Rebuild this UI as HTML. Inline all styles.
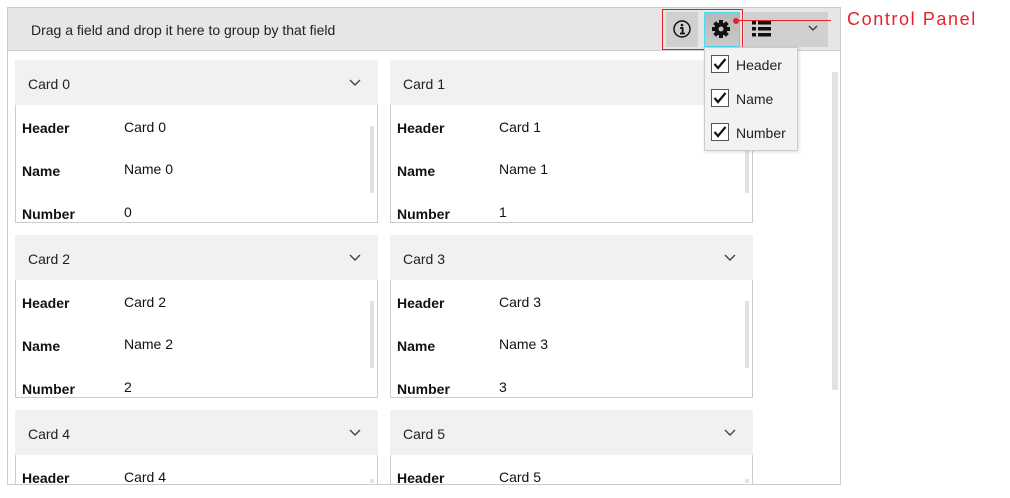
<!DOCTYPE html>
<html style="overflow:hidden"><head><style>
*{margin:0;padding:0;box-sizing:border-box}
body{width:1010px;height:498px;background:#fff;font-family:"Liberation Sans",sans-serif;font-size:14px;color:#111;position:relative;overflow:hidden}
.a{position:absolute}
.frame{left:7px;top:7px;width:834px;height:478px;border:1px solid #ccc;overflow:hidden}
.band{left:8px;top:8px;width:832px;height:43px;background:#e6e6e6;border-bottom:1px solid #d0d0d0}
.card{position:absolute;width:363px;height:163px;overflow:hidden}
.ch{position:absolute;left:0;top:0;width:363px;height:45px;background:#f1f1f1}
.ch span{position:absolute;left:13px;top:16px;font-size:14px;color:#222}
.chev{position:absolute;right:17px;top:19px}
.cb{position:absolute;left:0;top:45px;width:363px;height:118px;border:1px solid #ccc;border-top:none;background:#fff}
.l{position:absolute;left:6px;font-weight:bold;font-size:14px}
.v{position:absolute;left:108px;font-size:14px}
.sb{position:absolute;left:354px;top:21px;width:4px;height:67px;background:#e2e2e2}
</style></head><body>
<div class="a frame"></div>
<div class="a band"></div>
<div class="a" style="left:31px;top:22px;font-size:14px;color:#222">Drag a field and drop it here to group by that field</div>

<div class="card" style="left:15px;top:60px"><div class="ch"><span>Card 0</span><svg class="chev" width="12" height="8"><path d="M1 1l5 5 5-5" fill="none" stroke="#444" stroke-width="1.4"/></svg></div><div class="cb"><div class="l" style="top:15px">Header</div><div class="v" style="top:14px">Card 0</div><div class="l" style="top:58px">Name</div><div class="v" style="top:56px">Name 0</div><div class="l" style="top:101px">Number</div><div class="v" style="top:99px">0</div><div class="sb"></div></div></div>
<div class="card" style="left:390px;top:60px"><div class="ch"><span>Card 1</span></div><div class="cb"><div class="l" style="top:15px">Header</div><div class="v" style="top:14px">Card 1</div><div class="l" style="top:58px">Name</div><div class="v" style="top:56px">Name 1</div><div class="l" style="top:101px">Number</div><div class="v" style="top:99px">1</div><div class="sb"></div></div></div>
<div class="card" style="left:15px;top:235px"><div class="ch"><span>Card 2</span><svg class="chev" width="12" height="8"><path d="M1 1l5 5 5-5" fill="none" stroke="#444" stroke-width="1.4"/></svg></div><div class="cb"><div class="l" style="top:15px">Header</div><div class="v" style="top:14px">Card 2</div><div class="l" style="top:58px">Name</div><div class="v" style="top:56px">Name 2</div><div class="l" style="top:101px">Number</div><div class="v" style="top:99px">2</div><div class="sb"></div></div></div>
<div class="card" style="left:390px;top:235px"><div class="ch"><span>Card 3</span><svg class="chev" width="12" height="8"><path d="M1 1l5 5 5-5" fill="none" stroke="#444" stroke-width="1.4"/></svg></div><div class="cb"><div class="l" style="top:15px">Header</div><div class="v" style="top:14px">Card 3</div><div class="l" style="top:58px">Name</div><div class="v" style="top:56px">Name 3</div><div class="l" style="top:101px">Number</div><div class="v" style="top:99px">3</div><div class="sb"></div></div></div>
<div class="card" style="left:15px;top:410px;height:74px"><div class="ch"><span>Card 4</span><svg class="chev" width="12" height="8"><path d="M1 1l5 5 5-5" fill="none" stroke="#444" stroke-width="1.4"/></svg></div><div class="cb"><div class="l" style="top:15px">Header</div><div class="v" style="top:14px">Card 4</div><div class="sb" style="top:24px;height:4px"></div></div></div>
<div class="card" style="left:390px;top:410px;height:74px"><div class="ch"><span>Card 5</span><svg class="chev" width="12" height="8"><path d="M1 1l5 5 5-5" fill="none" stroke="#444" stroke-width="1.4"/></svg></div><div class="cb"><div class="l" style="top:15px">Header</div><div class="v" style="top:14px">Card 5</div><div class="sb" style="top:24px;height:4px"></div></div></div>

<div class="a" style="left:832px;top:72px;width:6px;height:318px;background:#e2e2e2"></div>

<div class="a" style="left:666px;top:12px;width:32px;height:35px;background:#d0d0d0"></div>
<svg class="a" style="left:672px;top:19px" width="20" height="20"><circle cx="10" cy="10" r="8" fill="none" stroke="#111" stroke-width="1.5"/><circle cx="10" cy="6" r="1.3" fill="#111"/><path d="M8 9h2.6v5M8 14.5h5" stroke="#111" stroke-width="1.8" fill="none"/></svg>
<div class="a" style="left:704px;top:12px;width:36px;height:35px;background:linear-gradient(#b8b8b8,#c8c8c8);border:1px solid #4fd8f0"></div>
<svg class="a" style="left:711px;top:19px" width="20" height="20" viewBox="0 0 20 20"><g fill="#111" transform="translate(10 10)"><rect x="-2" y="-9" width="4" height="18"/><rect x="-2" y="-9" width="4" height="18" transform="rotate(45)"/><rect x="-2" y="-9" width="4" height="18" transform="rotate(90)"/><rect x="-2" y="-9" width="4" height="18" transform="rotate(135)"/><circle r="6.5"/></g><circle cx="10" cy="10" r="2.5" fill="#c0c0c0"/></svg>
<div class="a" style="left:744px;top:12px;width:84px;height:35px;background:#d0d0d0"></div>
<svg class="a" style="left:752px;top:20px" width="20" height="18"><g fill="#111"><rect x="0" y="1" width="4" height="3.5"/><rect x="6" y="1" width="13" height="3.5"/><rect x="0" y="7" width="4" height="3.5"/><rect x="6" y="7" width="13" height="3.5"/><rect x="0" y="13" width="4" height="3.5"/><rect x="6" y="13" width="13" height="3.5"/></g></svg>
<svg class="a" style="left:808px;top:25px" width="10" height="6"><path d="M1 1l4 4 4-4" fill="none" stroke="#333" stroke-width="1.3"/></svg>

<div class="a" style="left:662px;top:9px;width:81px;height:41px;border:1px solid #e8202a"></div>
<div class="a" style="left:733px;top:18px;width:6px;height:6px;border-radius:50%;background:#e8202a"></div>
<div class="a" style="left:736px;top:20px;width:95px;height:1px;background:#e8202a"></div>
<div class="a" style="left:847px;top:9px;font-size:18px;color:#e8202a;letter-spacing:1.6px;white-space:nowrap">Control Panel</div>

<div class="a" style="left:704px;top:47px;width:94px;height:104px;background:#f2f2f2;border:1px solid #ccc;box-shadow:1px 1px 3px rgba(0,0,0,.15)"></div>
<svg class="a" style="left:711px;top:55px" width="20" height="86"><g fill="#fff" stroke="#555" stroke-width="1"><rect x="0.5" y="0.5" width="17" height="17"/><rect x="0.5" y="34.5" width="17" height="17"/><rect x="0.5" y="68.5" width="17" height="17"/></g><g fill="none" stroke="#111" stroke-width="2.2"><path d="M3.5 9l3.5 4 7.5-9"/><path d="M3.5 43l3.5 4 7.5-9"/><path d="M3.5 77l3.5 4 7.5-9"/></g></svg>
<div class="a" style="left:736px;top:57px;font-size:14px;color:#222">Header</div>
<div class="a" style="left:736px;top:91px;font-size:14px;color:#222">Name</div>
<div class="a" style="left:736px;top:125px;font-size:14px;color:#222">Number</div>
</body></html>
